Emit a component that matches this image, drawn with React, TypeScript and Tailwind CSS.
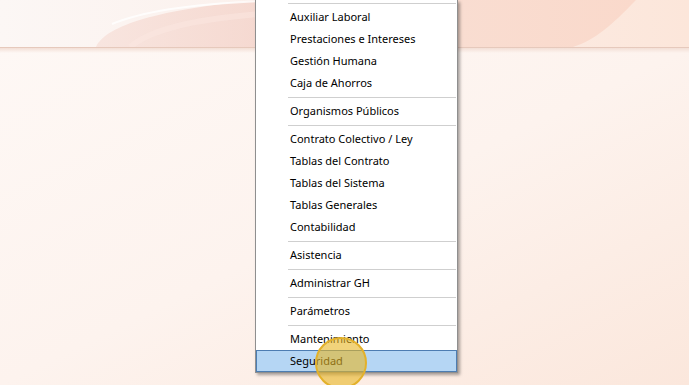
import React from 'react';

const groups: string[][] = [
  ['Auxiliar Laboral', 'Prestaciones e Intereses', 'Gestión Humana', 'Caja de Ahorros'],
  ['Organismos Públicos'],
  ['Contrato Colectivo / Ley', 'Tablas del Contrato', 'Tablas del Sistema', 'Tablas Generales', 'Contabilidad'],
  ['Asistencia'],
  ['Administrar GH'],
  ['Parámetros'],
  ['Mantenimiento', 'Seguridad'],
];

const selected = 'Seguridad';

const Separator: React.FC = () => (
  <div className="h-[6px] pt-[3px] pl-[32px] pr-px">
    <div className="h-px bg-[#cfcfcf]"></div>
  </div>
);

const MenuItem: React.FC<{ label: string }> = ({ label }) => {
  if (label === selected) {
    return (
      <div className="h-[22px] flex items-center pl-[33px] bg-[#b5d6f4] border border-[#4d7db2]">
        {label}
      </div>
    );
  }
  return <div className="h-[22px] flex items-center pl-[34px]">{label}</div>;
};

export default function App() {
  return (
    <div
      className="relative w-[689px] h-[385px] overflow-hidden flex flex-col bg-[#fdf5f1]"
      style={{ fontFamily: '"Noto Sans", "Liberation Sans", sans-serif' }}
    >
      {/* top banner */}
      <div className="relative h-[47px] bg-gradient-to-r from-[#fcf7f5] via-[#fbefea] to-[#fce6da]">
        <svg className="absolute inset-0" width="689" height="47" viewBox="0 0 689 47">
          <defs>
            <linearGradient id="pink" x1="0" y1="0" x2="1" y2="0">
              <stop offset="0" stopColor="#f7e0d9" />
              <stop offset="0.5" stopColor="#f3cfc5" />
              <stop offset="1" stopColor="#f6d6cb" />
            </linearGradient>
            <linearGradient id="peach" x1="0" y1="0" x2="1" y2="0">
              <stop offset="0" stopColor="#f9ddd1" />
              <stop offset="1" stopColor="#fad9cb" />
            </linearGradient>
          </defs>
          <path d="M96 47 C 104 28, 150 10, 260 0 L 460 0 L 460 47 Z" fill="url(#pink)" opacity="0.75" />
          <path d="M112 24 C 140 12, 190 4, 260 1" stroke="#ffffff" strokeWidth="2" fill="none" opacity="0.8" />
          <path d="M130 47 C 150 30, 190 20, 260 14" stroke="#fbe7e2" strokeWidth="6" fill="none" opacity="0.5" />
          <path d="M458 0 L 636 0 C 612 25, 595 40, 573 47 L 458 47 Z" fill="url(#peach)" />
        </svg>
      </div>
      <div className="h-px bg-[#e6c9bc]"></div>
      <div className="flex-1 bg-gradient-to-br from-[#fef8f5] via-[#fdf3ee] to-[#fbe7dc]">
        <div className="h-[5px] bg-gradient-to-b from-[#f3dfd6] to-transparent"></div>
      </div>

      {/* popup menu */}
      <div className="absolute left-[255px] top-0 w-[203px] bg-white border-x border-b border-[#8f8f8f] shadow-[2px_2px_3px_rgba(0,0,0,0.35)] text-[11px] text-black">
        {groups.map((group, i) => (
          <div key={i}>
            <Separator />
            {group.map((label) => (
              <MenuItem key={label} label={label} />
            ))}
          </div>
        ))}
      </div>

      {/* click highlight */}
      <div className="absolute left-[315px] top-[337px] w-[52px] h-[52px] rounded-full bg-[#e7b623]/60 border-2 border-[#e3b12a]"></div>
    </div>
  );
}
